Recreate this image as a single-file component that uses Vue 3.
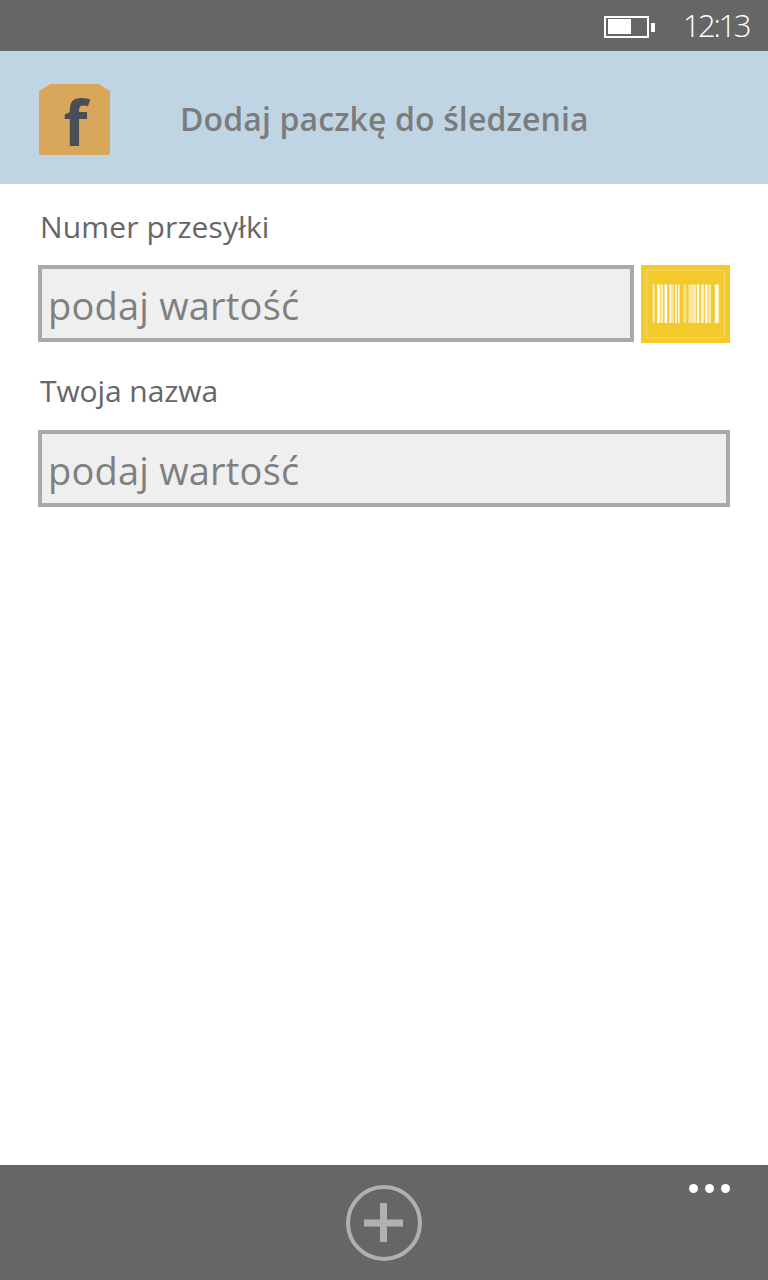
<script setup>
const bars = [
  [0, 2.3, 0.6], [4.7, 2.6, 1], [8, 2.7, 0.7], [12, 2.7, 1], [17, 2, 1], [19.7, 1.6, 0.6], [22.7, 1.6, 1], [25.7, 1.3, 1],
  [30.7, 3.3, 0.4], [36, 5, 0.55], [41, 2.3, 0.7], [44.3, 2.4, 1], [48.3, 3.4, 0.7], [52.7, 2.3, 1],
  [56, 2.3, 0.7], [62.3, 3.4, 1], [65.7, 1, 0.6]
]
</script>

<template>
  <div class="page">
    <div class="status">
      <svg class="battery" width="52" height="24" viewBox="0 0 52 24">
        <rect x="1" y="2" width="43" height="20" fill="none" stroke="#fff" stroke-width="2" />
        <rect x="4" y="4" width="23" height="15" fill="#fff" />
        <rect x="47" y="8" width="4" height="9" fill="#fff" />
      </svg>
      <span class="time">12:13</span>
    </div>

    <header class="header">
      <div class="logo"><span>f</span></div>
      <h1 class="title">Dodaj paczkę do śledzenia</h1>
    </header>

    <main class="form">
      <label class="label first">Numer przesyłki</label>
      <div class="row">
        <div class="input">podaj wartość</div>
        <button class="scan" type="button" aria-label="Skanuj">
          <svg width="89" height="78" viewBox="0 0 89 78">
            <rect x="5.5" y="5.5" width="78" height="67" fill="none" stroke="#f6d868" stroke-width="1" />
            <g transform="translate(11.5 19.5)">
              <rect
                v-for="(b, i) in bars"
                :key="i"
                :x="b[0]"
                y="0"
                :width="b[1]"
                height="38.5"
                fill="#fff"
                :fill-opacity="b[2]"
              />
            </g>
          </svg>
        </button>
      </div>
      <label class="label second">Twoja nazwa</label>
      <div class="row">
        <div class="input">podaj wartość</div>
      </div>
    </main>

    <footer class="appbar">
      <svg class="add" width="78" height="78" viewBox="0 0 78 78">
        <circle cx="39" cy="39" r="36" fill="none" stroke="#b0b0b0" stroke-width="4" />
        <rect x="19" y="35.5" width="39" height="7" fill="#b0b0b0" />
        <rect x="35" y="19" width="7" height="39" fill="#b0b0b0" />
      </svg>
      <div class="dots"><i></i><i></i><i></i></div>
    </footer>
  </div>
</template>

<style>
html, body { margin: 0; background: #fff; }
</style>

<style scoped>
.page {
  width: 768px;
  height: 1280px;
  display: flex;
  flex-direction: column;
  font-family: "Open Sans", "Noto Sans", sans-serif;
  background: #fff;
  overflow: hidden;
}
.status {
  height: 51px;
  flex: none;
  background: #666;
  display: flex;
  align-items: center;
  justify-content: flex-end;
  padding-right: 19px;
  box-sizing: border-box;
  color: #fff;
}
.battery { margin-right: 27px; margin-top: 3px; }
.time { font-size: 31px; line-height: 51px; letter-spacing: -2.4px; font-weight: 300; }
.header {
  height: 133px;
  flex: none;
  background: #c0d5e4;
  display: flex;
  align-items: center;
  padding-left: 39px;
  box-sizing: border-box;
}
.logo {
  width: 71px;
  height: 71px;
  margin-top: 4px;
  background: #d8a75c;
  border-radius: 2px;
  clip-path: polygon(0 10%, 16% 0, 84% 0, 100% 10%, 100% 100%, 0 100%);
  display: flex;
  align-items: center;
  justify-content: center;
}
.logo span {
  font-size: 62px;
  line-height: 71px;
  font-weight: 700;
  color: #4a4e57;
  margin-top: 5px;
  margin-left: 2px;
}
.title {
  margin: 2px 0 0 70px;
  font-size: 32px;
  font-weight: 600;
  letter-spacing: 0.12px;
  color: #7c7c7c;
  line-height: 40px;
}
.form {
  flex: 1;
  padding: 0 38px;
  display: flex;
  flex-direction: column;
}
.label {
  display: block;
  font-size: 30px;
  line-height: 40px;
  color: #666;
  padding-left: 2px;
}
.label.first { margin-top: 23px; margin-bottom: 18px; letter-spacing: 0.14px; }
.label.second { margin-top: 29px; margin-bottom: 19px; letter-spacing: -0.08px; }
.row { display: flex; gap: 7px; height: 77px; }
.input {
  flex: 1;
  box-sizing: border-box;
  border: 4px solid #a9a9a9;
  background: #efefef;
  color: #808080;
  font-size: 38px;
  line-height: 72px;
  letter-spacing: 0.2px;
  padding-left: 6px;
}
.scan {
  width: 89px;
  height: 78px;
  padding: 0;
  border: 0;
  background: #f3c92c;
  display: block;
}
.scan svg { display: block; }
.appbar {
  height: 115px;
  flex: none;
  background: #666;
  position: relative;
  display: flex;
  justify-content: center;
  align-items: flex-start;
  padding-top: 19px;
  box-sizing: border-box;
}
.add { display: block; margin-left: -1px; }
.dots {
  position: absolute;
  top: 19px;
  right: 38px;
  display: flex;
  gap: 7px;
}
.dots i { width: 9px; height: 9px; border-radius: 50%; background: #fff; display: block; }
</style>
